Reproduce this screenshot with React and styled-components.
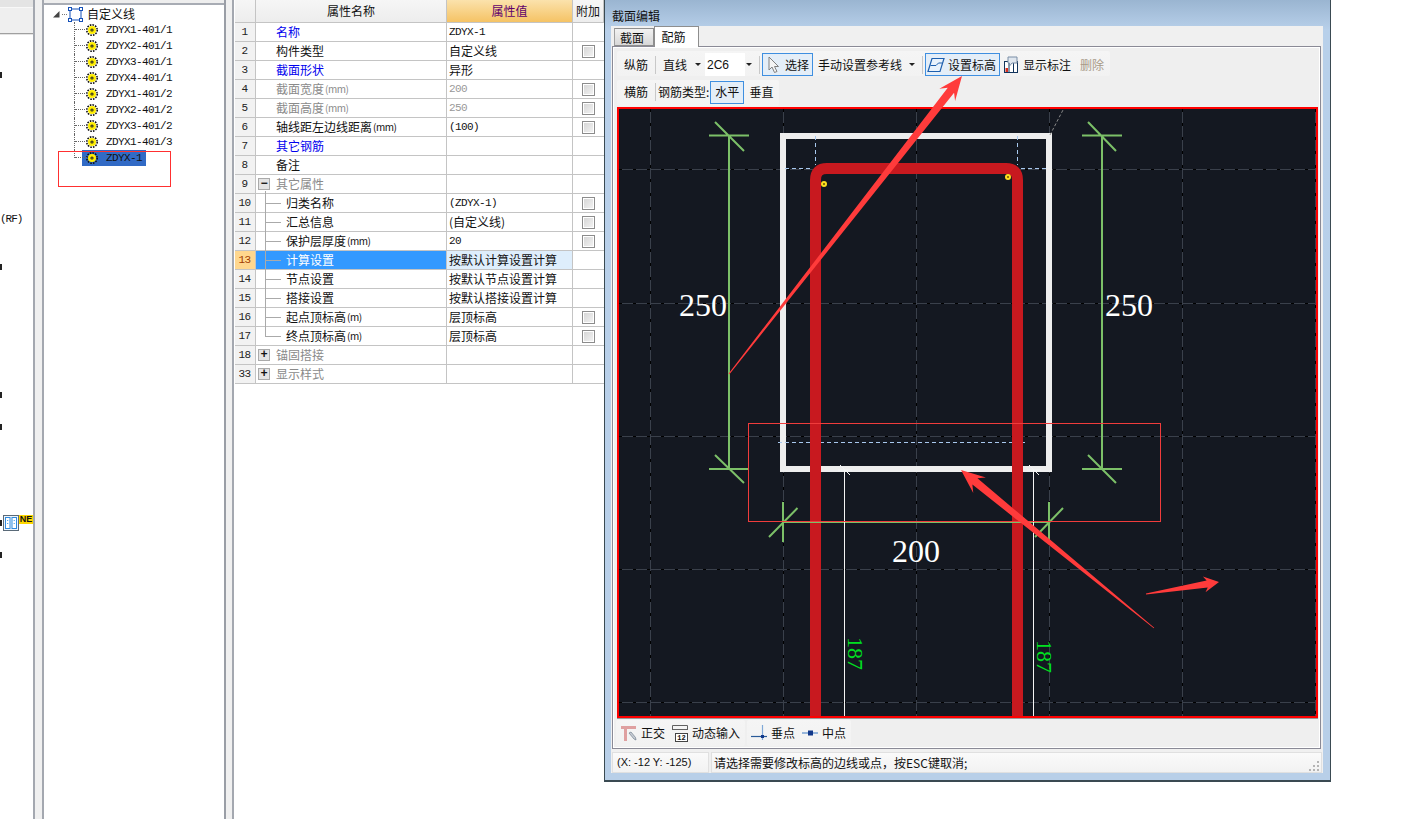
import React from 'react';
import styled, { createGlobalStyle } from 'styled-components';

const CJK = "'Noto Sans CJK SC', 'Liberation Sans', sans-serif";
const MONO = "'Liberation Mono', 'Noto Sans CJK SC', monospace";
const SERIF = "'Liberation Serif', serif";

const Global = createGlobalStyle`
  html, body { margin: 0; padding: 0; background: #fff; overflow: hidden; }
  * { box-sizing: border-box; }
`;

const Page = styled.div`
  position: relative; display: flex; width: 1404px; height: 819px; background: #fff;
  font: 12px/1 ${CJK}; color: #111; overflow: hidden;
`;

/* ---------- far left stub ---------- */
const Stub = styled.div`
  width: 35px; height: 100%; border-right: 2px solid #a4a8b0; flex: none;
  display: flex; flex-direction: column;
`;
const StubTop = styled.div`
  height: 35px; flex: none; padding-top: 7px; background: #e4e4e4;
`;
const StubBand = styled.div`
  height: 27px; background: #efefef; border-top: 1px solid #f8f8f8; border-bottom: 1px solid #a0a0a0;
`;
const StubRow = styled.div`
  height: 16px; display: flex; align-items: center; flex: none;
  font: 11px/16px ${MONO}; letter-spacing: -1px; white-space: nowrap; color: #111;
`;
const Tick = styled.span`width: 2px; height: 6px; background: #222; flex: none;`;
const NewBadge = styled.span`
  margin: -8px 0 0 0; width: 14px; height: 9px; background: #ffd800; color: #111; letter-spacing: 0;
  font: bold 9px/9px 'Liberation Sans', sans-serif; text-align: center; flex: none;
`;
const Splitter = styled.div`
  flex: none; width: ${p => p.$w}px; height: 100%; background: #f0f0f0;
  border-right: ${p => p.$edge ? '2px solid #a4a8b0' : 'none'};
`;

/* ---------- tree ---------- */
const TreePanel = styled.div`
  flex: none; width: 182px; height: 100%; background: #fff; border-right: 2px solid #9a9ea6;
  display: flex; flex-direction: column;
`;
const TreeTop = styled.div`height: 5px; flex: none; background: #eee; border-bottom: 2px solid #a8acb4;`;
const TreeRoot = styled.div`
  height: 16px; flex: none; display: flex; align-items: center; padding-left: 9px; margin-top: 1px;
`;
const Dots = styled.span`width: 5px; margin: 0 1px 0 2px; border-top: 1px dotted #777;`;
const RootLabel = styled.span`margin-left: 4px; font-size: 12px; color: #111;`;
const TreeRow = styled.div`
  height: 16px; flex: none; display: flex; align-items: center; margin-left: 30px;
`;
const Connector = styled.span`
  position: relative; width: 13px; height: 16px; flex: none; border-left: 1px dotted #666;
  ${p => p.$last ? 'height: 8px; align-self: flex-start;' : ''}
  &::after {
    content: ''; position: absolute; left: 0; width: 12px; border-top: 1px dotted #666; top: 7px;
  }
`;
const NodeLabel = styled.span`
  display: flex; align-items: center; height: 16px; gap: 8px; padding: 0 4px 0 4px;
  background: ${p => p.$sel ? '#316ac5' : 'transparent'};
  margin-left: -5px;
  font: 11px/16px ${MONO}; letter-spacing: -0.6px; color: #111;
`;

/* ---------- property grid ---------- */
const Grid = styled.div`flex: none; width: 370px; padding-left: 1px;`;
const GridRow = styled.div`
  display: grid; grid-template-columns: 21px 191px 126px 31px; height: 19px;
  border-bottom: 1px solid #c4c4c4;
`;
const HeaderRow = styled(GridRow)`height: 23px;`;
const HeadCell = styled.div`
  display: flex; align-items: center; justify-content: center; border-right: 1px solid #c4c4c4;
  background: ${p => p.$active ? 'linear-gradient(#fbe2ac, #f5c365)' : 'linear-gradient(#f6f6f6, #ededed)'};
  color: ${p => p.$active ? '#60006c' : '#111'};
`;
const IndexCell = styled.div`
  display: flex; align-items: center; justify-content: center; border-right: 1px solid #c4c4c4;
  font: 11px/1 ${MONO}; letter-spacing: -0.6px; padding-right: 1px;
  background: ${p => p.$active ? '#ffd78e' : '#f2f2f2'};
  color: ${p => p.$active ? '#a03c00' : '#222'};
`;
const toneColor = { link: '#0000ee', dim: '#8a8a8a', normal: '#111' };
const NameCell = styled.div`
  position: relative; display: flex; align-items: center; border-right: 1px solid #c4c4c4;
  padding-left: ${p => p.$child ? 30 : 20}px;
  background: ${p => p.$active ? '#3399ff' : '#fff'};
  color: ${p => p.$active ? '#fff' : toneColor[p.$tone]};
`;
const Unit = styled.span`font-size: 10px; letter-spacing: -0.5px; margin-left: 1px;`;
const ValueCell = styled.div`
  display: flex; align-items: center; padding-left: 2px; border-right: 1px solid #c4c4c4; white-space: nowrap;
  background: ${p => p.$active ? '#deeefc' : '#fff'};
  color: ${p => p.$dim ? '#999' : '#111'};
  font: ${p => p.$mono ? `11px/1 ${MONO}` : `12px/1 ${CJK}`};
  letter-spacing: ${p => p.$mono ? '-0.6px' : '0'};
`;
const AddCell = styled.div`display: flex; align-items: center; justify-content: center;`;
const Check = styled.span`
  width: 13px; height: 13px; border: 1px solid #8c8c8c; background: linear-gradient(135deg, #d4d4d4, #f4f4f4);
  box-shadow: inset 0 0 0 1px #fff;
`;
const Expander = styled.span`
  position: absolute; left: 2px; top: 3px; width: 12px; height: 12px; border: 1px solid #aaa;
  background: #e4e4e4; display: flex; align-items: center; justify-content: center;
  color: #111; font: bold 12px/10px 'Liberation Mono', monospace;
`;
const TreeV = styled.span`
  position: absolute; left: 9px; top: ${p => p.$first ? '-3px' : '0'}; bottom: ${p => p.$last ? '9px' : '-1px'};
  border-left: 1px solid #aaa;
`;
const TreeH = styled.span`
  position: absolute; left: 9px; width: 16px; top: 9px; border-top: 1px solid #aaa;
`;

/* ---------- dialog ---------- */
const Dialog = styled.div`
  flex: none; width: 727px; height: 782px; display: flex; flex-direction: column;
  border: 1px solid #3a4a52; border-top: none; border-bottom-width: 2px;
  background: linear-gradient(#9ab5d1 0, #b8d0ea 30px, #b8cfe8 100%);
`;
const Title = styled.div`
  height: 26px; flex: none; padding: 10px 0 0 7px; font-size: 12px; line-height: 12px; color: #111;
`;
const Content = styled.div`
  margin: 0 7px 0 6px; height: 747px; flex: none; background: #f0f0f0; display: flex; flex-direction: column;
`;
const Tabs = styled.div`height: 20px; flex: none; display: flex; align-items: flex-end; padding-left: 3px; position: relative; z-index: 1;`;
const Tab = styled.div`
  display: flex; align-items: center; justify-content: center;
  width: ${p => p.$active ? 45 : 40}px; height: ${p => p.$active ? 21 : 18}px;
  padding-right: ${p => p.$active ? 6 : 4}px;
  padding-top: ${p => p.$active ? 0 : 1}px;
  margin-bottom: ${p => p.$active ? -1 : 0}px;
  border: 1px solid #8e8e8e; border-bottom: ${p => p.$active ? 'none' : '1px solid #8e8e8e'};
  border-left: ${p => p.$active ? '1px solid #8e8e8e' : '1px solid #a0a0a0'};
  background: ${p => p.$active ? '#fff' : 'linear-gradient(#f2f2f2, #d8d8d8)'};
`;
const Panel = styled.div`
  margin: 0 2px 0 1px; height: 703px; flex: none; border: 1px solid #8a8a96; background: #efefef;
  box-shadow: inset 0 0 0 1px #fff; padding: 4px 1px 0 4px; display: flex; flex-direction: column;
`;
const Toolbar = styled.div`
  display: flex; align-items: center; height: ${p => p.$h || 25}px; flex: none; align-self: flex-start;
  margin-top: ${p => p.$mt || 0}px; margin-left: ${p => p.$ml || 0}px;
  padding: ${p => p.$pt || 0}px 0 ${p => p.$pb || 0}px;
  background: linear-gradient(#f5f5f5, #f2f2f2); border-radius: 2px;
`;
const ToolRow = styled.div`display: flex; height: 26px; margin-top: 2px; flex: none; gap: 2px;`;
const ToolText = styled.span`
  padding: 0 ${p => p.$pr ?? 7}px 0 ${p => p.$pl ?? 7}px; white-space: nowrap; flex: none;
  color: ${p => p.$off ? '#a89a88' : '#111'};
`;
const Sep = styled.span`
  width: 1px; height: 18px; background: #c8c8c8; flex: none; margin: 0 ${p => p.$mr ?? 0}px 0 ${p => p.$ml ?? 0}px;
`;
const Caret = styled.span`
  flex: none; width: 0; height: 0; border-left: 3px solid transparent; border-right: 3px solid transparent;
  border-top: 3px solid #222; margin: 0 ${p => p.$mr ?? 5}px 0 ${p => p.$ml ?? 2}px;
`;
const Combo = styled.span`
  flex: none; width: 40px; height: 23px; background: #fff; padding-left: 2px; display: flex; align-items: center;
  font: 12px/1 'Liberation Sans', sans-serif;
`;
const ToggleBtn = styled.span`
  flex: none; display: flex; align-items: center; gap: ${p => p.$gap ?? 5}px; height: 23px;
  padding: 0 ${p => p.$pr ?? 3}px 0 ${p => p.$pl ?? 3}px; border: 1px solid #3f8fe0; background: #e4eef8; white-space: nowrap;
`;
const IconSlot = styled.span`display: flex; flex: none; margin: 0 ${p => p.$mr ?? 0}px 0 ${p => p.$ml ?? 0}px;`;
const Canvas = styled.div`
  width: 701px; height: 611px; flex: none; margin-top: 1px; border: 2px solid #ff0000; background: #141821;
  box-shadow: 0 1px 0 #9a9a9a;
`;
const Drawing = styled.svg`display: block; width: 697px; height: 607px;`;
const StatusBar = styled.div`display: flex; gap: 2px; margin: 3px 0 0 1px; height: 21px; flex: none;`;
const StatusCell = styled.div`
  position: relative; height: 21px; display: flex; align-items: center; width: ${p => p.$w}px; padding-left: ${p => p.$pl}px; white-space: nowrap;
  background: linear-gradient(#fafafa, #f2f2f2); border: 1px solid #e0e0e0;
  font-family: ${p => p.$latin ? "'Liberation Sans', sans-serif" : CJK}; font-size: ${p => p.$latin ? 11 : 12}px;
`;
const Grip = styled.svg`position: absolute; right: 1px; bottom: 1px; width: 12px; height: 12px;`;
const Overlay = styled.svg`position: absolute; left: 0; top: 0; width: 1404px; height: 819px; pointer-events: none;`;
const Marker = styled.div`
  position: absolute; left: 58px; top: 151px; width: 113px; height: 36px; border: 1px solid #ff3030;
`;

/* ---------- icons ---------- */
const Gear = () => (
  <svg width="12" height="12" viewBox="0 0 12 12">
    <circle cx="6" cy="6" r="5.2" fill="none" stroke="#111" strokeWidth="1.6" strokeDasharray="1.6 1.1" />
    <circle cx="6" cy="6" r="4" fill="#ffee00" />
    <circle cx="6" cy="6" r="1.6" fill="#222" />
    <circle cx="6" cy="6" r="0.6" fill="#ffee00" />
  </svg>
);
const RootIcon = () => (
  <svg width="15" height="15" viewBox="0 0 15 15">
    <rect x="2" y="2" width="11" height="11" fill="#fff" stroke="#1450b8" />
    {[[0.5, 0.5], [11.5, 0.5], [0.5, 11.5], [11.5, 11.5]].map(([x, y]) => (
      <rect key={`${x}${y}`} x={x} y={y} width="3" height="3" fill="#fff" stroke="#1450b8" />
    ))}
  </svg>
);
const Triangle = () => (
  <svg width="7" height="7" viewBox="0 0 7 7"><path d="M0 6.5 L6.5 6.5 L6.5 0 Z" fill="#444" /></svg>
);
const ColumnsIcon = () => (
  <svg width="16" height="16" viewBox="0 0 16 16">
    <rect x="0.5" y="0.5" width="15" height="15" fill="#eef4fb" stroke="#5a6a78" />
    <rect x="2.5" y="2.5" width="4.5" height="11" fill="#fff" stroke="#2f8be0" />
    <rect x="9" y="2.5" width="4.5" height="11" fill="#fff" stroke="#2f8be0" />
    <path d="M4.7 5v1M4.7 8v1M11.2 5v1M11.2 8v1" stroke="#2f8be0" />
  </svg>
);
const CursorIcon = () => (
  <svg width="12" height="18" viewBox="0 0 12 18">
    <path d="M1 1 L1 14 L4 11 L6.5 16.5 L9 15.5 L6.5 10.5 L10.5 10.5 Z" fill="#f4f4f4" stroke="#808080" />
  </svg>
);
const ElevationIcon = () => (
  <svg width="18" height="16" viewBox="0 0 18 16">
    <path d="M5 1.5 H17 L13 14.5 H1 Z" fill="#eaf3fc" stroke="#1d5fae" strokeWidth="1.2" />
    <path d="M3.5 8.5 H9 L11.5 6 H15" fill="none" stroke="#1d5fae" />
  </svg>
);
const LabelsIcon = () => (
  <svg width="15" height="17" viewBox="0 0 15 17">
    <rect x="0.5" y="5.5" width="13" height="11" fill="#fff" stroke="#12345c" />
    <path d="M5 6v10M9.5 6v10" stroke="#12345c" />
    <rect x="1.5" y="12" width="2.5" height="4" fill="#d83020" />
    <path d="M4 1 H13 V7 H8 L5.5 10 V7 H4 Z" fill="#dfe6ee" stroke="#7a8ea6" />
  </svg>
);
const OrthoIcon = () => (
  <svg width="16" height="17" viewBox="0 0 16 17">
    <path d="M0 1 H15 V4 H6 V16 H3 V4 H0 Z" fill="#dfa0a0" />
    <path d="M8 8 L13 14 L15 15 L14.5 12.5 L10 7 Z" fill="#c8ccd4" stroke="#70808e" strokeWidth="0.7" />
  </svg>
);
const InputIcon = () => (
  <svg width="16" height="17" viewBox="0 0 16 17">
    <path d="M0.5 0.5 H15.5 M0.5 0.5 V5 M15.5 0.5 V5 M0.5 4.5 H15.5" fill="none" stroke="#606060" />
    <rect x="3.5" y="8.5" width="12" height="8" fill="#fff" stroke="#444" />
    <text x="9.5" y="15" fontSize="7" textAnchor="middle" fontFamily="'Liberation Mono', monospace" fontWeight="bold" fill="#111">12</text>
  </svg>
);
const FootIcon = () => (
  <svg width="16" height="16" viewBox="0 0 16 16">
    <path d="M11.5 0 V15" stroke="#7fa8d8" strokeWidth="1.2" />
    <path d="M0 11.5 H16" stroke="#2a5a98" strokeWidth="1.2" />
    <rect x="10" y="10" width="3" height="3" fill="#12388a" />
  </svg>
);
const MidIcon = () => (
  <svg width="16" height="6" viewBox="0 0 16 6">
    <path d="M0 3 H16" stroke="#6f9bd0" strokeWidth="1.4" />
    <rect x="6" y="0.5" width="5" height="5" fill="#12388a" />
  </svg>
);

/* ---------- drawing helpers ---------- */
const gridX = [650.5, 783.5, 916.5, 1049.5, 1182.5, 1315.5];
const gridY = [169.5, 303.5, 436.5, 569.5, 702.5];
const Guide = ({ x1, y1, x2, y2 }) => (
  <>
    <line x1={x1} y1={y1} x2={x2} y2={y2} stroke="#3a404b" />
    <line x1={x1} y1={y1} x2={x2} y2={y2} stroke="#000" strokeDasharray="3 11" />
  </>
);
const Dim = ({ d }) => <path d={d} fill="none" stroke="#7cc068" strokeWidth="2" />;
const Num = ({ x, y, children }) => (
  <text x={x} y={y} fill="#fff" fontSize="32" fontFamily={SERIF} textAnchor="middle">{children}</text>
);
const Side = ({ x, y }) => (
  <text transform={`translate(${x} ${y}) rotate(90)`} fill="#00e020" fontSize="22" fontFamily={SERIF}>187</text>
);

const arrow = ([tx, ty], [hx, hy], tail, neckAt, neck, wingAt, wing) => {
  const len = Math.hypot(hx - tx, hy - ty);
  const ux = (hx - tx) / len, uy = (hy - ty) / len;
  const nx = -uy, ny = ux;
  const pt = (back, off) => `${hx - ux * back + nx * off},${hy - uy * back + ny * off}`;
  return [pt(len, -tail), pt(len, tail), pt(neckAt, neck), pt(wingAt, wing), `${hx},${hy}`, pt(wingAt, -wing), pt(neckAt, -neck)].join(' ');
};

/* ---------- data ---------- */
const treeItems = ['ZDYX1-401/1', 'ZDYX2-401/1', 'ZDYX3-401/1', 'ZDYX4-401/1', 'ZDYX1-401/2', 'ZDYX2-401/2', 'ZDYX3-401/2', 'ZDYX1-401/3', 'ZDYX-1'];

const rows = [
  { n: 1, name: '名称', tone: 'link', val: 'ZDYX-1', mono: true },
  { n: 2, name: '构件类型', val: '自定义线', check: true },
  { n: 3, name: '截面形状', tone: 'link', val: '异形' },
  { n: 4, name: '截面宽度', unit: '(mm)', tone: 'dim', val: '200', mono: true, dimVal: true, check: true },
  { n: 5, name: '截面高度', unit: '(mm)', tone: 'dim', val: '250', mono: true, dimVal: true, check: true },
  { n: 6, name: '轴线距左边线距离', unit: '(mm)', val: '(100)', mono: true, check: true },
  { n: 7, name: '其它钢筋', tone: 'link' },
  { n: 8, name: '备注' },
  { n: 9, name: '其它属性', tone: 'dim', group: '−' },
  { n: 10, name: '归类名称', child: true, val: '(ZDYX-1)', mono: true, check: true },
  { n: 11, name: '汇总信息', child: true, val: '(自定义线)', check: true },
  { n: 12, name: '保护层厚度', unit: '(mm)', child: true, val: '20', mono: true, check: true },
  { n: 13, name: '计算设置', child: true, val: '按默认计算设置计算', active: true },
  { n: 14, name: '节点设置', child: true, val: '按默认节点设置计算' },
  { n: 15, name: '搭接设置', child: true, val: '按默认搭接设置计算' },
  { n: 16, name: '起点顶标高', unit: '(m)', child: true, val: '层顶标高', check: true },
  { n: 17, name: '终点顶标高', unit: '(m)', child: true, val: '层顶标高', check: true, last: true },
  { n: 18, name: '锚固搭接', tone: 'dim', group: '+' },
  { n: 33, name: '显示样式', tone: 'dim', group: '+' },
];

const ticks = new Set([2, 14, 22, 24, 30, 32]);

export default function App() {
  return (
    <Page>
      <Global />
      <Stub>
        <StubTop><StubBand /></StubTop>
        <div>
          {Array.from({ length: 34 }, (_, i) => (
            <StubRow key={i}>
              {i === 11 && '(RF)'}
              {ticks.has(i) && <Tick />}
              {i === 30 && <IconSlot $ml={1}><ColumnsIcon /></IconSlot>}
              {i === 30 && <NewBadge>NE</NewBadge>}
            </StubRow>
          ))}
        </div>
      </Stub>
      <Splitter $w={9} $edge />
      <TreePanel>
        <TreeTop />
        <TreeRoot>
          <Triangle /><Dots /><RootIcon /><RootLabel>自定义线</RootLabel>
        </TreeRoot>
        {treeItems.map((t, i) => (
          <TreeRow key={t}>
            <Connector $last={i === treeItems.length - 1} />
            <NodeLabel $sel={i === treeItems.length - 1}><Gear />{t}</NodeLabel>
          </TreeRow>
        ))}
      </TreePanel>
      <Splitter $w={8} $edge />
      <Grid>
        <HeaderRow>
          <HeadCell />
          <HeadCell>属性名称</HeadCell>
          <HeadCell $active>属性值</HeadCell>
          <HeadCell>附加</HeadCell>
        </HeaderRow>
        {rows.map(r => (
          <GridRow key={r.n}>
            <IndexCell $active={r.active}>{r.n}</IndexCell>
            <NameCell $child={r.child} $active={r.active} $tone={r.tone || 'normal'}>
              {r.group && <Expander>{r.group}</Expander>}
              {r.child && <TreeV $first={r.n === 10} $last={r.last} />}
              {r.child && <TreeH />}
              {r.name}{r.unit && <Unit>{r.unit}</Unit>}
            </NameCell>
            <ValueCell $active={r.active} $mono={r.mono} $dim={r.dimVal}>{r.val}</ValueCell>
            <AddCell>{r.check && <Check />}</AddCell>
          </GridRow>
        ))}
      </Grid>

      <Dialog>
        <Title>截面编辑</Title>
        <Content>
          <Tabs>
            <Tab>截面</Tab>
            <Tab $active>配筋</Tab>
          </Tabs>
          <Panel>
            <Toolbar $pt={2}>
              <ToolText>纵筋</ToolText>
              <Sep />
              <ToolText>直线</ToolText>
              <Caret $ml={1} $mr={4} />
              <Combo>2C6</Combo>
              <Caret $ml={1} $mr={3} />
              <Sep $ml={4} $mr={2} />
              <ToggleBtn $pl={5}><IconSlot><CursorIcon /></IconSlot>选择</ToggleBtn>
              <ToolText $pl={5} $pr={5}>手动设置参考线</ToolText>
              <Caret $ml={2} $mr={2} />
              <Sep $ml={5} $mr={2} />
              <ToggleBtn $gap={3} $pl={1}><IconSlot><ElevationIcon /></IconSlot>设置标高</ToggleBtn>
              <IconSlot $ml={4} $mr={4}><LabelsIcon /></IconSlot>
              <ToolText $pl={0} $pr={9}>显示标注</ToolText>
              <ToolText $off $pl={0} $pr={6}>删除</ToolText>
            </Toolbar>
            <Toolbar $mt={4} $h={26} $pb={2}>
              <ToolText>横筋</ToolText>
              <Sep $mr={2} />
              <ToolText $pl={0} $pr={1}>钢筋类型:</ToolText>
              <ToggleBtn $pl={4} $pr={4}>水平</ToggleBtn>
              <ToolText $pl={5} $pr={6}>垂直</ToolText>
            </Toolbar>
            <Canvas>
              <Drawing viewBox="619 109 697 607">
                {gridX.map(x => <Guide key={x} x1={x} y1={109} x2={x} y2={716} />)}
                {gridY.map(y => <Guide key={y} x1={619} y1={y} x2={1316} y2={y} />)}

                <rect x="783" y="136" width="266" height="333" fill="none" stroke="#eeeeee" strokeWidth="6" />
                <path d="M1050 135 L1063 110" stroke="#888" strokeDasharray="3 2" />
                <path d="M815.5 136 V165 M1017.5 136 V165 M785 168.5 H812 M1021 168.5 H1047 M778 442.5 H1025" fill="none" stroke="#a8c8ee" strokeDasharray="4 3" />

                <path d="M815.5 716 V180 Q815.5 168.5 827 168.5 H1006 Q1017.5 168.5 1017.5 180 V716" fill="none" stroke="#c8191f" strokeWidth="11" />
                <circle cx="824" cy="184" r="3" fill="#ffe020" /><circle cx="824" cy="184" r="1" fill="#665500" />
                <circle cx="1008" cy="177" r="3" fill="#ffe020" /><circle cx="1008" cy="177" r="1" fill="#665500" />

                <Dim d="M729 135.5 V469 M709 135.5 H749 M715 122 L744 151 M709 469 H748 M715 455 L744 483" />
                <Dim d="M1102 135.5 V469 M1082 135.5 H1122 M1088 122 L1116 151 M1082 469 H1122 M1088 455 L1116 483" />
                <Dim d="M783 522 H1049 M783 502 V542 M769 537 L797.5 508 M1049 502 V542 M1035 537 L1063 508" />

                <path d="M844.5 470 V716 M1033.5 470 V716 M838 470 H852 M840 465 L850 475 M1027 470 H1041 M1029 465 L1039 475" fill="none" stroke="#f4f4f4" />
                <rect x="748.5" y="423.5" width="412" height="98" fill="none" stroke="#f03c3c" />

                <Num x={703} y={316}>250</Num>
                <Num x={1129} y={316}>250</Num>
                <Num x={916} y={562}>200</Num>
                <Side x={848} y={637} />
                <Side x={1037} y={640} />
              </Drawing>
            </Canvas>
            <ToolRow>
              <Toolbar $h={26} $ml={-1}>
                <IconSlot $ml={5} $mr={4}><OrthoIcon /></IconSlot>
                <ToolText $pl={0} $pr={7}>正交</ToolText>
                <IconSlot $mr={4}><InputIcon /></IconSlot>
                <ToolText $pl={0} $pr={5}>动态输入</ToolText>
              </Toolbar>
              <Toolbar $h={26}>
                <IconSlot $ml={4} $mr={4}><FootIcon /></IconSlot>
                <ToolText $pl={0} $pr={7}>垂点</ToolText>
                <IconSlot $mr={4}><MidIcon /></IconSlot>
                <ToolText $pl={0} $pr={5}>中点</ToolText>
              </Toolbar>
            </ToolRow>
          </Panel>
          <StatusBar>
            <StatusCell $w={97} $pl={4} $latin>(X: -12 Y: -125)</StatusCell>
            <StatusCell $w={611} $pl={2}>
              请选择需要修改标高的边线或点，按ESC键取消;
              <Grip viewBox="0 0 12 12">
                <path d="M9 2h2v2h-2zM5 6h2v2h-2zM9 6h2v2h-2zM1 10h2v2h-2zM5 10h2v2h-2zM9 10h2v2h-2z" fill="#b4b4b4" />
              </Grip>
            </StatusCell>
          </StatusBar>
        </Content>
      </Dialog>

      <Marker />
      <Overlay viewBox="0 0 1404 819">
        <polygon points={arrow([729, 374], [962, 76], 0.6, 18, 4, 24, 10)} fill="#ff3b3b" />
        <polygon points={arrow([1154, 628], [961, 470], 0.4, 18, 4, 24, 10)} fill="#ff3b3b" />
        <polygon points={arrow([1146, 594], [1219, 582], 0.5, 12, 3.5, 15, 8)} fill="#ff3b3b" />
      </Overlay>
    </Page>
  );
}
